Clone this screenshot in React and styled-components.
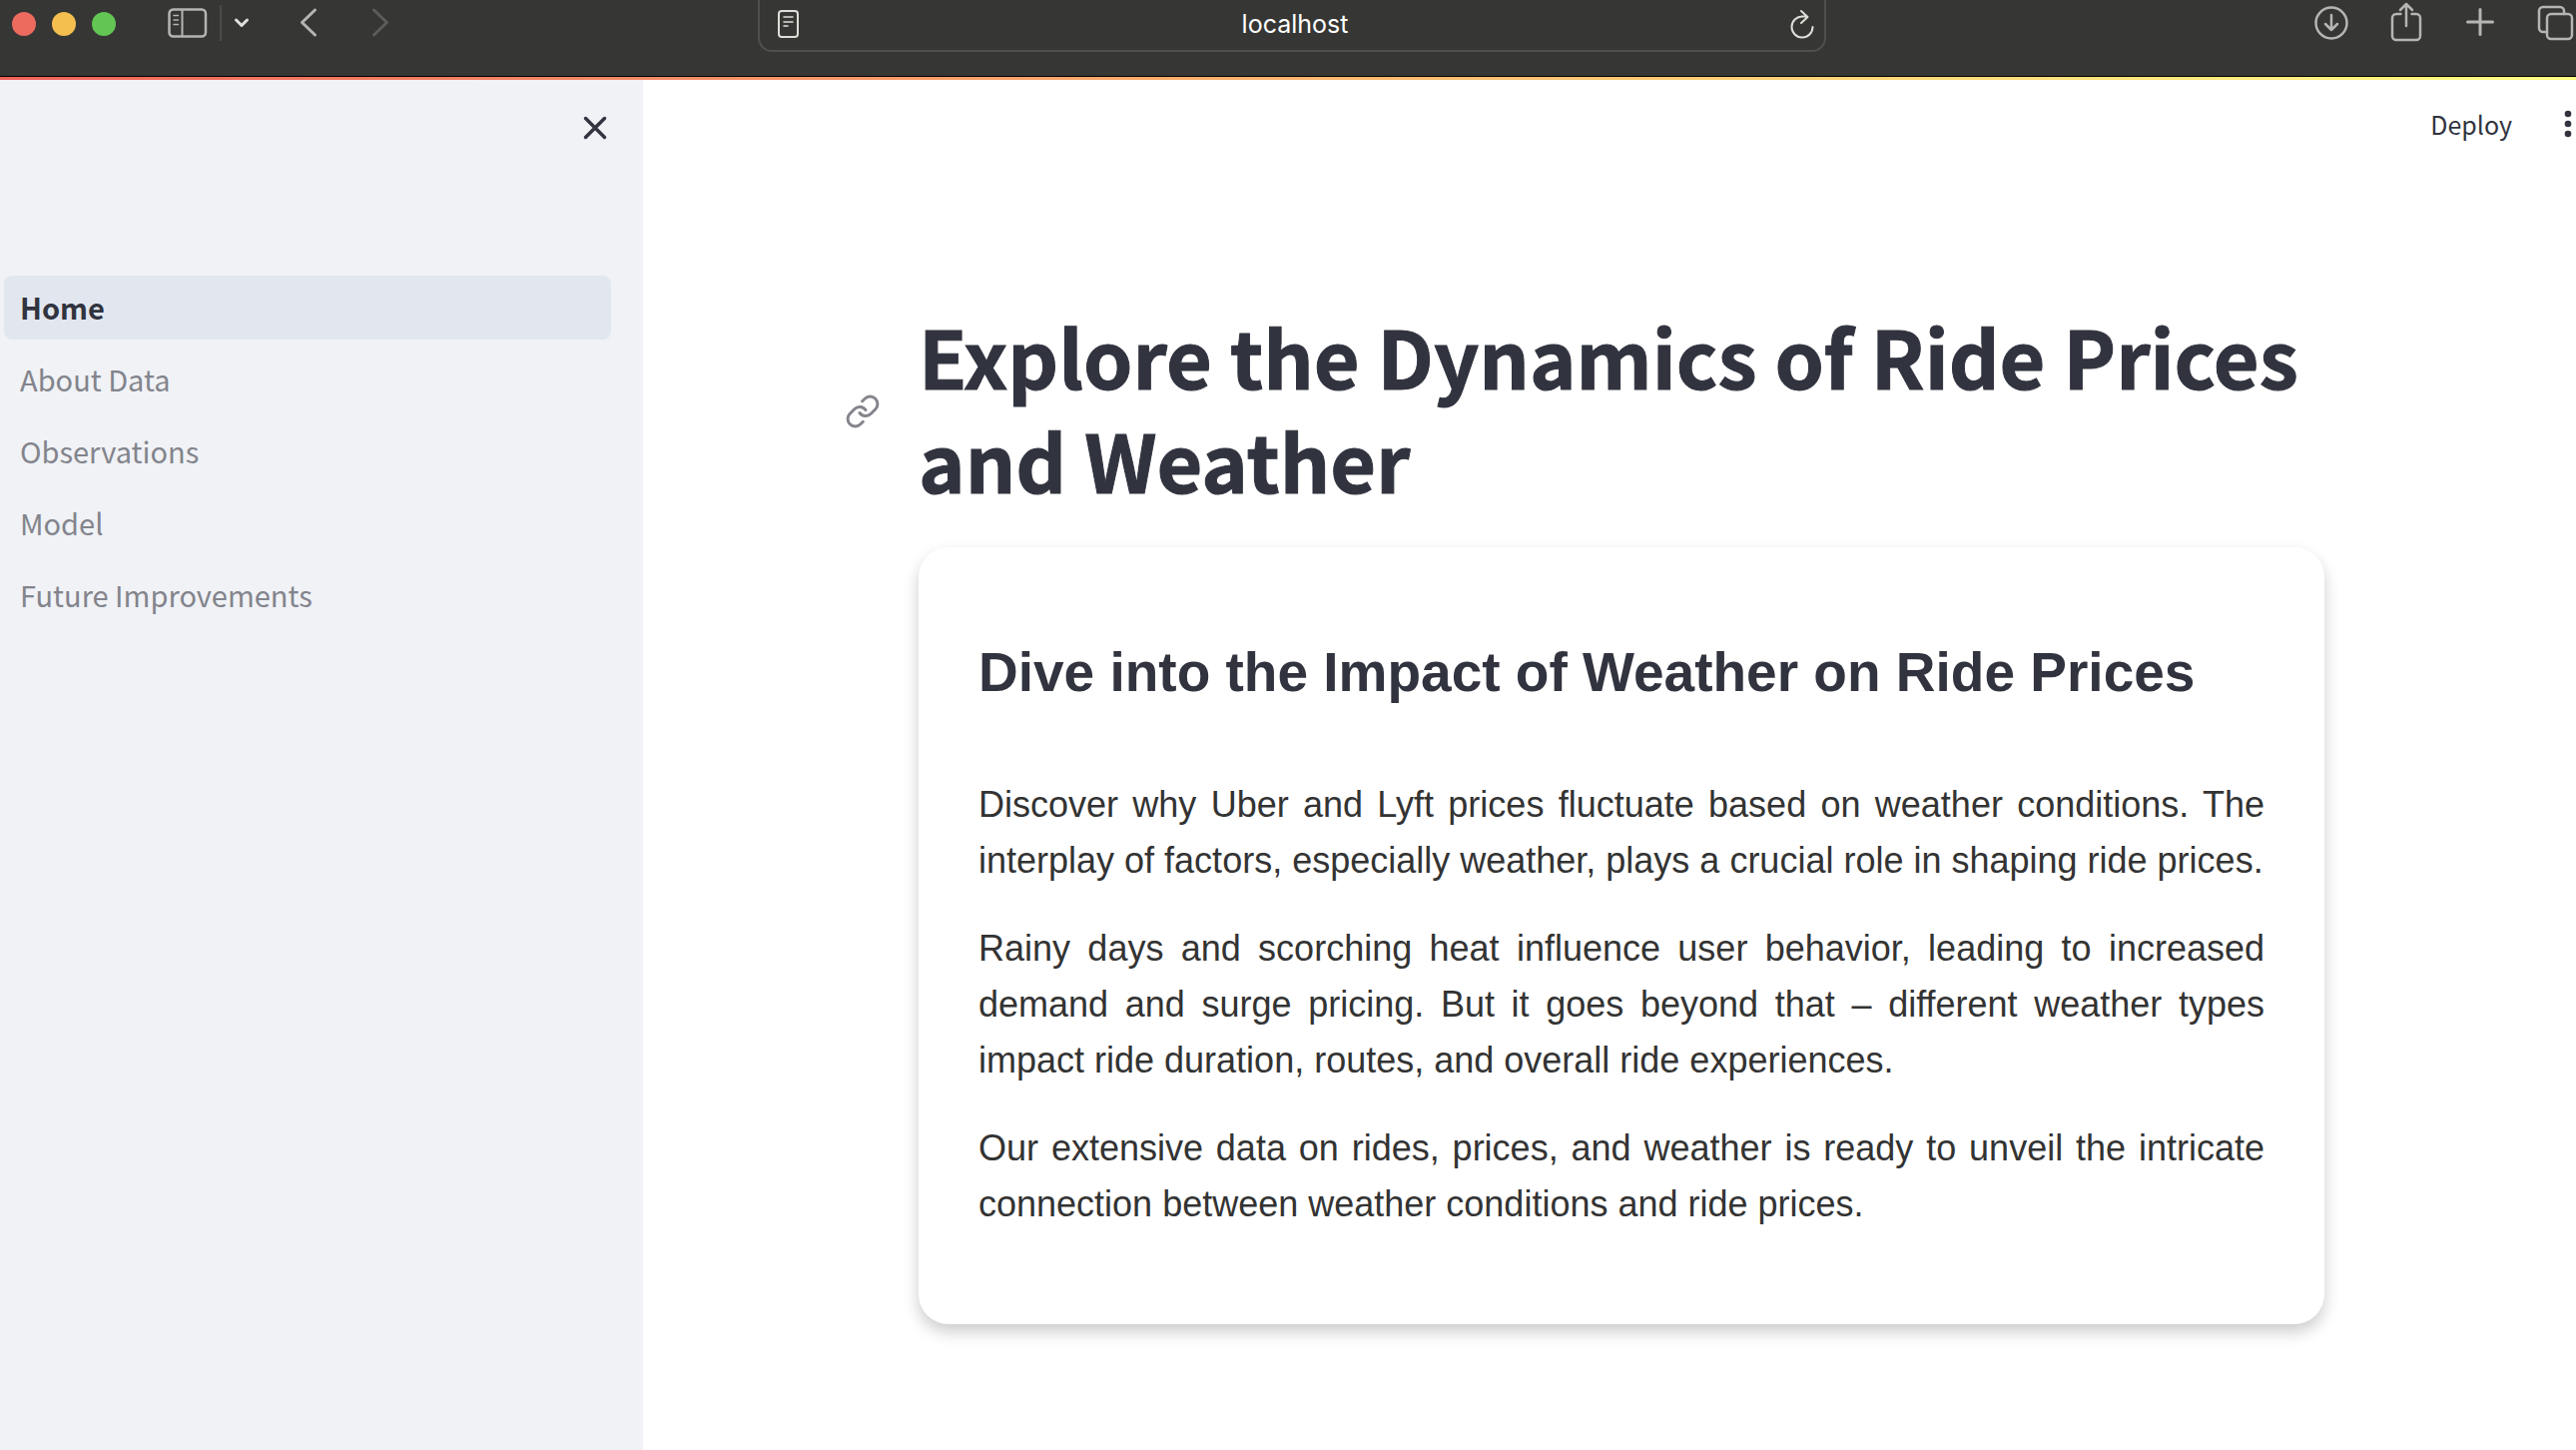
import React from 'react';
import styled, { createGlobalStyle } from 'styled-components';

const source = '"Noto Sans CJK SC", "Noto Sans", sans-serif';
const helvetica = '"Liberation Sans", Arial, sans-serif';

const GlobalStyle = createGlobalStyle`
  *, *::before, *::after { box-sizing: border-box; }
  html, body, #root { height: 100%; }
  body { margin: 0; background: #fff; color: #31333f; font-family: ${source}; }
  h1, h2, p, ul { margin: 0; padding: 0; }
  button, input { font: inherit; color: inherit; }
`;

const Window = styled.div`
  display: flex;
  flex-direction: column;
  min-height: 100%;
`;

const Toolbar = styled.header`
  display: grid;
  grid-template-columns: 1fr minmax(0, 1070px) 1fr;
  height: 77px;
  padding-left: 8px;
  flex: none;
  background: #363634;
  border-bottom: 1px solid #000;
`;

const ToolGroup = styled.div`
  display: flex;
  align-items: center;
  height: 46px;
  gap: ${(p) => p.$gap || 0}px;
  justify-content: ${(p) => (p.$end ? 'flex-end' : 'flex-start')};
`;

const Lights = styled.div`
  display: flex;
  gap: 16px;
  margin: 0 48px 0 4px;
  padding-top: 2px;
`;

const Light = styled.button`
  width: 24px;
  height: 24px;
  padding: 0;
  border: 0;
  border-radius: 50%;
  background: ${(p) => p.$color};
`;

const History = styled.div`
  display: flex;
  gap: 32px;
  margin-left: 35px;
`;

const IconButton = styled.button`
  display: flex;
  align-items: center;
  justify-content: center;
  width: ${(p) => p.$width || 40}px;
  height: 40px;
  padding: 0;
  border: 0;
  background: none;
  color: ${(p) => p.$color || '#b5b5b3'};
  flex: none;

  svg { display: block; flex: none; overflow: visible; }
`;

const Divider = styled.span`
  width: 2px;
  height: 36px;
  margin: 0 8px;
  background: #4b4b49;
`;

const AddressBar = styled.div`
  display: flex;
  align-items: center;
  height: 52px;
  padding: 0 2px 2px 8px;
  border: 2px solid #4f4f4d;
  border-top: 0;
  border-radius: 0 0 14px 14px;
`;

const Address = styled.input`
  flex: 1;
  min-width: 0;
  padding: 0;
  border: 0;
  outline: 0;
  background: none;
  color: #fff;
  font-family: Inter, sans-serif;
  font-size: 25px;
  line-height: 32px;
  text-align: center;
`;

const Decoration = styled.div`
  flex: none;
  height: 3px;
  background: linear-gradient(90deg, #f0625a, #fbb36c 50%, #fffd80);
`;

const Page = styled.div`
  display: flex;
  flex: 1;
`;

const Sidebar = styled.aside`
  flex: none;
  width: 644px;
  padding: 28px 32px 0 4px;
  background: #f0f2f6;
`;

const SidebarTop = styled.div`
  display: flex;
  justify-content: flex-end;
  height: 168px;
`;

const NavList = styled.ul`
  display: flex;
  flex-direction: column;
  gap: 8px;
  list-style: none;
`;

const NavLink = styled.a`
  display: flex;
  align-items: center;
  height: 64px;
  padding: 0 16px 2px;
  border-radius: 8px;
  background: ${(p) => (p.$active ? '#e2e7ef' : 'transparent')};
  color: ${(p) => (p.$active ? '#31333f' : '#83848c')};
  font-size: 29px;
  font-weight: ${(p) => (p.$active ? 700 : 400)};
  line-height: 48px;
  text-decoration: none;
`;

const Main = styled.main`
  flex: 1;
  min-width: 0;
`;

const AppHeader = styled.div`
  display: flex;
  justify-content: flex-end;
  align-items: center;
  height: 88px;
`;

const Deploy = styled.button`
  padding: 0 48px 0 24px;
  border: 0;
  background: none;
  font-size: 25px;
  line-height: 40px;
`;

const Content = styled.div`
  max-width: 1432px;
  margin: 0 auto;
  padding: 136px 0 0 24px;
`;

const TitleRow = styled.div`
  position: relative;
  margin-bottom: 36px;
`;

const Anchor = styled.a`
  position: absolute;
  top: 90px;
  right: 100%;
  margin-right: 38px;
  color: #84858c;

  svg { display: block; }
`;

const Title = styled.h1`
  font-size: 79px;
  font-weight: 700;
  line-height: 104px;
  -webkit-text-stroke: 1px currentColor;
`;

const Card = styled.section`
  padding: 60px;
  border-radius: 30px;
  background: #fff;
  box-shadow: 0 8px 16px rgba(0, 0, 0, 0.2);
  font-family: ${helvetica};
`;

const CardTitle = styled.h2`
  padding: 32px 0;
  margin-bottom: 40px;
  font-size: 55px;
  font-weight: 700;
  line-height: 66px;
`;

const Paragraph = styled.p`
  margin-bottom: 32px;
  color: #333;
  font-size: 36px;
  line-height: 56px;
  text-align: justify;
`;

const Svg = ({ w, h, sw = 3, children, ...rest }) => (
  <svg width={w} height={h} viewBox={`0 0 ${w} ${h}`} fill="none" stroke="currentColor"
    strokeWidth={sw} strokeLinecap="round" strokeLinejoin="round" aria-hidden="true" {...rest}>
    {children}
  </svg>
);

const pages = ['Home', 'About Data', 'Observations', 'Model', 'Future Improvements'];

const paragraphs = [
  'Discover why Uber and Lyft prices fluctuate based on weather conditions. The interplay of factors, especially weather, plays a crucial role in shaping ride prices.',
  'Rainy days and scorching heat influence user behavior, leading to increased demand and surge pricing. But it goes beyond that – different weather types impact ride duration, routes, and overall ride experiences.',
  'Our extensive data on rides, prices, and weather is ready to unveil the intricate connection between weather conditions and ride prices.',
];

export default function App() {
  return (
    <Window>
      <GlobalStyle />
      <Toolbar>
        <ToolGroup>
          <Lights>
            <Light $color="#ed6a5e" aria-label="Close window" />
            <Light $color="#f5bf4f" aria-label="Minimise window" />
            <Light $color="#62c554" aria-label="Zoom window" />
          </Lights>
          <IconButton aria-label="Sidebar" $width={48}>
            <Svg w={40} h={30} sw={2.5}>
              <rect x="1.5" y="1.500" width="36.500" height="27" rx="4" />
              <path d="M14.500 2v26" strokeWidth="2" />
              <path d="M6 7.500h4.500M6 12h4.500M6 16.500h4.500" strokeWidth="1.500" />
            </Svg>
          </IconButton>
          <Divider />
          <IconButton aria-label="Tab groups" $color="#e0e0de" $width={24}>
            <Svg w={14} h={10}><path d="M1.500 2l5.500 5.500L12.500 2" /></Svg>
          </IconButton>
          <History>
            <IconButton aria-label="Back"><Svg w={18} h={30}><path d="M15.500 2L2.500 14.500l13 12.500" /></Svg></IconButton>
            <IconButton aria-label="Forward" $color="#5c5c5a"><Svg w={18} h={30}><path d="M2.500 2l13 12.500L2.500 27" /></Svg></IconButton>
          </History>
        </ToolGroup>
        <AddressBar>
          <IconButton aria-label="Reader" $color="#deded9">
            <Svg w={20} h={28} sw={2}>
              <rect x="1" y="1" width="19" height="26" rx="3" />
              <path d="M6 7h9M6 12h9M6 16h4" strokeWidth="1.500" />
            </Svg>
          </IconButton>
          <Address aria-label="Address" defaultValue="localhost" />
          <IconButton aria-label="Reload" $color="#deded9">
            <Svg w={24} h={28} sw={2}>
              <path d="M17 6.500H12.500A10.500 10.500 0 1 0 22.500 17M11 1l6.500 6-6.500 6" />
            </Svg>
          </IconButton>
        </AddressBar>
        <ToolGroup $end $gap={35}>
          <IconButton aria-label="Downloads">
            <Svg w={34} h={34} sw={2.500}><circle cx="17" cy="17" r="15.500" /><path d="M17 9v15M11 18l6 6 6-6" /></Svg>
          </IconButton>
          <IconButton aria-label="Share">
            <Svg w={30} h={42} sw={2.500}><path d="M9.500 12H5a4 4 0 0 0-4 4v18a4 4 0 0 0 4 4h20a4 4 0 0 0 4-4V16a4 4 0 0 0-4-4h-4.500M15 24V2.500M9 8l6-6 6 6" /></Svg>
          </IconButton>
          <IconButton aria-label="New tab"><Svg w={28} h={28}><path d="M13 .500v25M.500 13h25" /></Svg></IconButton>
          <IconButton aria-label="Tab overview">
            <Svg w={36} h={34} sw={2.500}><path d="M9 26H5a4 4 0 0 1-4-4V5a4 4 0 0 1 4-4h17a4 4 0 0 1 4 4v3" /><rect x="9" y="8" width="25" height="25" rx="4" /></Svg>
          </IconButton>
        </ToolGroup>
      </Toolbar>
      <Decoration />
      <Page>
        <Sidebar>
          <SidebarTop>
            <IconButton aria-label="Close sidebar" $color="#31333f" $width={32}>
              <Svg w={24} h={24} sw={3.500}><path d="M2.500 2.500l19 19M21.500 2.500l-19 19" /></Svg>
            </IconButton>
          </SidebarTop>
          <nav aria-label="Pages">
            <NavList>
              {pages.map((name, i) => (
                <li key={name}><NavLink href="#" $active={i === 0}>{name}</NavLink></li>
              ))}
            </NavList>
          </nav>
        </Sidebar>
        <Main>
          <AppHeader>
            <Deploy>Deploy</Deploy>
            <IconButton aria-label="Main menu" $color="#31333f" $width={16}>
              <svg width="8" height="28" viewBox="0 0 8 28" fill="currentColor"><circle cx="4" cy="4" r="3.300" /><circle cx="4" cy="14" r="3.300" /><circle cx="4" cy="24" r="3.300" /></svg>
            </IconButton>
          </AppHeader>
          <Content>
            <TitleRow>
              <Anchor href="#" aria-label="Link to this heading">
                <Svg w={36} h={36} sw={2} viewBox="0 0 24 24">
                  <path d="M10 13a5 5 0 0 0 7.540.54l3-3a5 5 0 0 0-7.070-7.070l-1.720 1.710" />
                  <path d="M14 11a5 5 0 0 0-7.540-.54l-3 3a5 5 0 0 0 7.070 7.070l1.710-1.710" />
                </Svg>
              </Anchor>
              <Title>Explore the Dynamics of Ride Prices and Weather</Title>
            </TitleRow>
            <Card>
              <CardTitle>Dive into the Impact of Weather on Ride Prices</CardTitle>
              {paragraphs.map((text) => <Paragraph key={text}>{text}</Paragraph>)}
            </Card>
          </Content>
        </Main>
      </Page>
    </Window>
  );
}
